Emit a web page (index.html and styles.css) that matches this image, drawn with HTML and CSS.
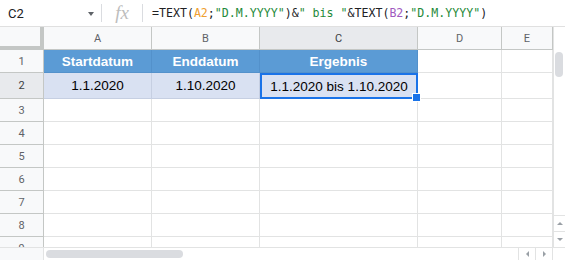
FILE: index.html
```html
<!DOCTYPE html>
<html lang="de">
<head>
  <meta charset="UTF-8">
  <title>TEXT Datum bis Datum</title>
  <link rel="stylesheet" href="styles.css">
</head>
<body>

  <div class="formel-leiste">
    <div class="namensfeld">
      <span>C2</span>
      <span class="pfeil"></span>
    </div>
    <div class="trenner"></div>
    <div class="fx">fx</div>
    <div class="trenner"></div>
    <div class="formel">=TEXT(<span class="ref-a">A2</span>;<span class="str">"D.M.YYYY"</span>)&amp;<span class="str">" bis "</span>&amp;TEXT(<span class="ref-b">B2</span>;<span class="str">"D.M.YYYY"</span>)</div>
  </div>

  <div class="blatt">
    <div class="raster">
      <div class="kopf ecke"></div>
      <div class="kopf">A</div>
      <div class="kopf">B</div>
      <div class="kopf aktiv">C</div>
      <div class="kopf">D</div>
      <div class="kopf">E</div>

      <div class="zeile">1</div>
      <div class="zelle titel">Startdatum</div>
      <div class="zelle titel">Enddatum</div>
      <div class="zelle titel">Ergebnis</div>
      <div class="zelle"></div>
      <div class="zelle"></div>

      <div class="zeile aktiv">2</div>
      <div class="zelle wert">1.1.2020</div>
      <div class="zelle wert">1.10.2020</div>
      <div class="zelle wert ausgewaehlt">1.1.2020 bis 1.10.2020<span class="griff"></span></div>
      <div class="zelle"></div>
      <div class="zelle"></div>

      <div class="zeile">3</div><div class="zelle"></div><div class="zelle"></div><div class="zelle"></div><div class="zelle"></div><div class="zelle"></div>
      <div class="zeile">4</div><div class="zelle"></div><div class="zelle"></div><div class="zelle"></div><div class="zelle"></div><div class="zelle"></div>
      <div class="zeile">5</div><div class="zelle"></div><div class="zelle"></div><div class="zelle"></div><div class="zelle"></div><div class="zelle"></div>
      <div class="zeile">6</div><div class="zelle"></div><div class="zelle"></div><div class="zelle"></div><div class="zelle"></div><div class="zelle"></div>
      <div class="zeile">7</div><div class="zelle"></div><div class="zelle"></div><div class="zelle"></div><div class="zelle"></div><div class="zelle"></div>
      <div class="zeile">8</div><div class="zelle"></div><div class="zelle"></div><div class="zelle"></div><div class="zelle"></div><div class="zelle"></div>
      <div class="zeile">9</div><div class="zelle"></div><div class="zelle"></div><div class="zelle"></div><div class="zelle"></div><div class="zelle"></div>
    </div>

    <div class="v-scroll">
      <div class="v-spur"><div class="v-daumen"></div></div>
      <div class="knopf"><span class="dreieck hoch"></span></div>
      <div class="knopf"><span class="dreieck runter"></span></div>
    </div>
  </div>

  <div class="h-scroll">
    <div class="h-links"></div>
    <div class="h-spur"><div class="h-daumen"></div></div>
    <div class="knopf-h"><span class="dreieck links"></span></div>
    <div class="knopf-h"><span class="dreieck rechts"></span></div>
    <div class="h-ecke"></div>
  </div>

</body>
</html>
```

FILE: styles.css
```css
body {
  margin: 0;
  width: 565px;
  height: 260px;
  overflow: hidden;
  background: #fff;
  font-family: Roboto, "Liberation Sans", sans-serif;
}

/* Formelleiste */
.formel-leiste {
  display: flex;
  align-items: center;
  height: 26px;
  border-bottom: 1px solid #e0e0e0;
}
.namensfeld {
  width: 101px;
  box-sizing: border-box;
  padding: 0 7px 0 8px;
  display: flex;
  align-items: center;
  justify-content: space-between;
  font-size: 13px;
  color: #202124;
}
.pfeil {
  border-left: 3.5px solid transparent;
  border-right: 3.5px solid transparent;
  border-top: 4px solid #5f6368;
  margin-top: 2px;
}
.trenner {
  width: 1px;
  height: 18px;
  background: #dadce0;
}
.fx {
  width: 40px;
  text-align: center;
  font-family: "Liberation Serif", serif;
  font-style: italic;
  font-size: 19px;
  color: #bdbdbd;
  line-height: 26px;
}
.formel {
  padding-left: 9px;
  font-family: "DejaVu Sans Mono", "Liberation Mono", monospace;
  font-size: 11.6px;
  color: #202124;
  white-space: nowrap;
}
.ref-a { color: #f0a030; }
.ref-b { color: #a05ac0; }
.str { color: #1f8a3a; }

/* Tabelle */
.blatt {
  display: flex;
  height: 220px;
}
.raster {
  display: grid;
  grid-template-columns: 44px 108px 108px 158px 84px 51px;
  grid-template-rows: 23px 23px 26px repeat(7, 23px);
  height: 220px;
  overflow: hidden;
}
.raster > div {
  box-sizing: border-box;
  display: flex;
  align-items: center;
  justify-content: center;
}
.kopf {
  background: #f8f9fa;
  border-right: 1px solid #c4c7c5;
  border-bottom: 1px solid #c4c7c5;
  font-size: 11px;
  color: #5f6368;
}
.kopf.ecke {
  border-right: 4px solid #c4c7c5;
  border-bottom: 4px solid #c4c7c5;
}
.zeile {
  background: #f8f9fa;
  border-right: 1px solid #c4c7c5;
  border-bottom: 1px solid #c4c7c5;
  font-size: 11px;
  color: #5f6368;
}
.kopf.aktiv,
.zeile.aktiv {
  background: #e8eaed;
  color: #3c4043;
}
.zelle {
  border-right: 1px solid #e2e3e3;
  border-bottom: 1px solid #e2e3e3;
  font-family: "Liberation Sans", Arial, sans-serif;
  font-size: 13.5px;
  color: #000;
}
.zelle.titel {
  background: #5b9bd5;
  border-color: #5391cb;
  color: #fff;
  font-weight: bold;
}
.zelle.wert {
  background: #d9e1f2;
  border-color: #c6cfe2;
}
.zelle.ausgewaehlt {
  position: relative;
  border: 2px solid #1a73e8;
}
.griff {
  position: absolute;
  right: -5px;
  bottom: -5px;
  width: 7px;
  height: 7px;
  background: #1a73e8;
  border: 1px solid #fff;
  z-index: 2;
}

/* Rollbalken */
.v-scroll {
  width: 12px;
  display: flex;
  flex-direction: column;
  border-left: 1px solid #e2e3e3;
  box-sizing: border-box;
}
.v-spur {
  flex: 1;
  padding-top: 25px;
}
.v-daumen {
  width: 8px;
  height: 25px;
  margin-left: 1px;
  background: #dadce0;
  border-radius: 4px;
}
.knopf {
  height: 15px;
  border-top: 1px solid #e2e3e3;
  display: flex;
  align-items: center;
  justify-content: center;
}
.dreieck {
  width: 0;
  height: 0;
}
.dreieck.hoch {
  border-left: 3px solid transparent;
  border-right: 3px solid transparent;
  border-bottom: 3px solid #9aa0a6;
}
.dreieck.runter {
  border-left: 3px solid transparent;
  border-right: 3px solid transparent;
  border-top: 3px solid #9aa0a6;
}
.dreieck.links {
  border-top: 3px solid transparent;
  border-bottom: 3px solid transparent;
  border-right: 3px solid #9aa0a6;
}
.dreieck.rechts {
  border-top: 3px solid transparent;
  border-bottom: 3px solid transparent;
  border-left: 3px solid #9aa0a6;
}

.h-scroll {
  display: flex;
  height: 13px;
  border-top: 1px solid #e2e3e3;
  box-sizing: border-box;
}
.h-links {
  width: 44px;
  border-right: 1px solid #e2e3e3;
  box-sizing: border-box;
  background: #f8f9fa;
}
.h-spur {
  width: 476px;
  padding: 2px 0 0 2px;
  box-sizing: border-box;
}
.h-daumen {
  width: 137px;
  height: 8px;
  background: #dadce0;
  border-radius: 4px;
}
.knopf-h {
  width: 16px;
  border-left: 1px solid #e2e3e3;
  display: flex;
  align-items: center;
  justify-content: center;
}
.h-ecke {
  width: 12px;
  border-left: 1px solid #e2e3e3;
}
```
